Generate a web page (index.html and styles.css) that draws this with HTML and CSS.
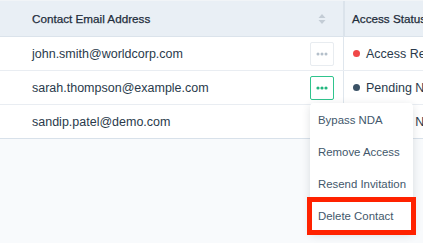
FILE: index.html
```html
<!DOCTYPE html>
<html lang="en">
<head>
    <meta charset="UTF-8">
    <title>Contacts</title>
    <link rel="stylesheet" href="styles.css">
</head>
<body>
    <div class="page">
        <div class="table">
            <div class="row head">
                <div class="cell email-col">
                    <span>Contact Email Address</span>
                    <svg class="sort" width="8" height="10" viewBox="0 0 8 10"><path d="M4 0L7.5 4H0.5Z M4 10L0.5 6H7.5Z" fill="#c3ccd5"/></svg>
                </div>
                <div class="cell status-col">Access Status</div>
            </div>
            <div class="row">
                <div class="cell email-col">
                    <span>john.smith@worldcorp.com</span>
                    <div class="actions">
                        <button class="dots"><svg width="12" height="4" viewBox="0 0 12 4"><circle cx="2" cy="2" r="1.5"/><circle cx="6" cy="2" r="1.5"/><circle cx="10" cy="2" r="1.5"/></svg></button>
                    </div>
                </div>
                <div class="cell status-col"><i class="dot red"></i>Access Revoked</div>
            </div>
            <div class="row">
                <div class="cell email-col">
                    <span>sarah.thompson@example.com</span>
                    <div class="actions">
                        <button class="dots active"><svg width="12" height="4" viewBox="0 0 12 4"><circle cx="2" cy="2" r="1.6"/><circle cx="6" cy="2" r="1.6"/><circle cx="10" cy="2" r="1.6"/></svg></button>
                        <div class="menu">
                            <div class="menu-item">Bypass NDA</div>
                            <div class="menu-item">Remove Access</div>
                            <div class="menu-item">Resend Invitation</div>
                            <div class="menu-item highlight">Delete Contact</div>
                        </div>
                    </div>
                </div>
                <div class="cell status-col"><i class="dot slate"></i>Pending NDA</div>
            </div>
            <div class="row">
                <div class="cell email-col">
                    <span>sandip.patel@demo.com</span>
                </div>
                <div class="cell status-col"><i class="dot slate"></i>Pending NDA</div>
            </div>
        </div>
    </div>
</body>
</html>
```

FILE: styles.css
```css
body {
    margin: 0;
    font-family: "Liberation Sans", Arial, sans-serif;
    background: #f8fafc;
    color: #2a3a4b;
}
.page {
    width: 423px;
    height: 243px;
    overflow: hidden;
}
.table {
    border-top: 1px solid #f1f4f7;
    width: 520px;
    background: #fff;
}
.row {
    display: grid;
    grid-template-columns: 343px 1fr;
    height: 33px;
    border-bottom: 1px solid #e9edf2;
    font-size: 12.5px;
}
.row:last-child {
    border-bottom-color: #d8e1ea;
}
.row.head {
    height: 35px;
    background: #e9eff5;
    border-bottom-color: #dbe3eb;
    font-size: 11.7px;
    color: #1f2d3c;
    -webkit-text-stroke: 0.25px #1f2d3c;
}
.cell {
    display: flex;
    align-items: center;
    white-space: nowrap;
}
.email-col {
    padding: 0 9px 0 32px;
    justify-content: space-between;
}
.status-col {
    border-left: 1px solid #dfe6ed;
    padding-left: 8px;
}
.head .status-col {
    border-left: 2px solid #dbe3eb;
    padding-left: 7px;
}
.sort {
    margin-right: 8px;
}
.actions {
    position: relative;
}
.dots {
    width: 24px;
    height: 24px;
    padding: 0;
    border: 1px solid #e8ecf0;
    border-radius: 2px;
    background: #fff;
    display: flex;
    align-items: center;
    justify-content: center;
    fill: #b4bfca;
}
.dots.active {
    border-color: #2fc48d;
    fill: #22b67e;
}
.dot {
    width: 7px;
    height: 7px;
    border-radius: 50%;
    margin: 0 6px 0 1px;
}
.dot.red {
    background: #f04848;
}
.dot.slate {
    background: #3b5266;
}
.menu {
    position: absolute;
    top: 27px;
    left: 0;
    width: 103px;
    padding: 1px 0;
    background: #fff;
    border-radius: 4px;
    box-shadow: 0 2px 8px rgba(30, 45, 60, 0.14);
    z-index: 10;
}
.menu-item {
    height: 32px;
    line-height: 32px;
    padding-left: 8px;
    font-size: 11.4px;
    color: #42576b;
}
.menu-item.highlight {
    outline: 5px solid #ff2200;
    outline-offset: -2px;
}
```
